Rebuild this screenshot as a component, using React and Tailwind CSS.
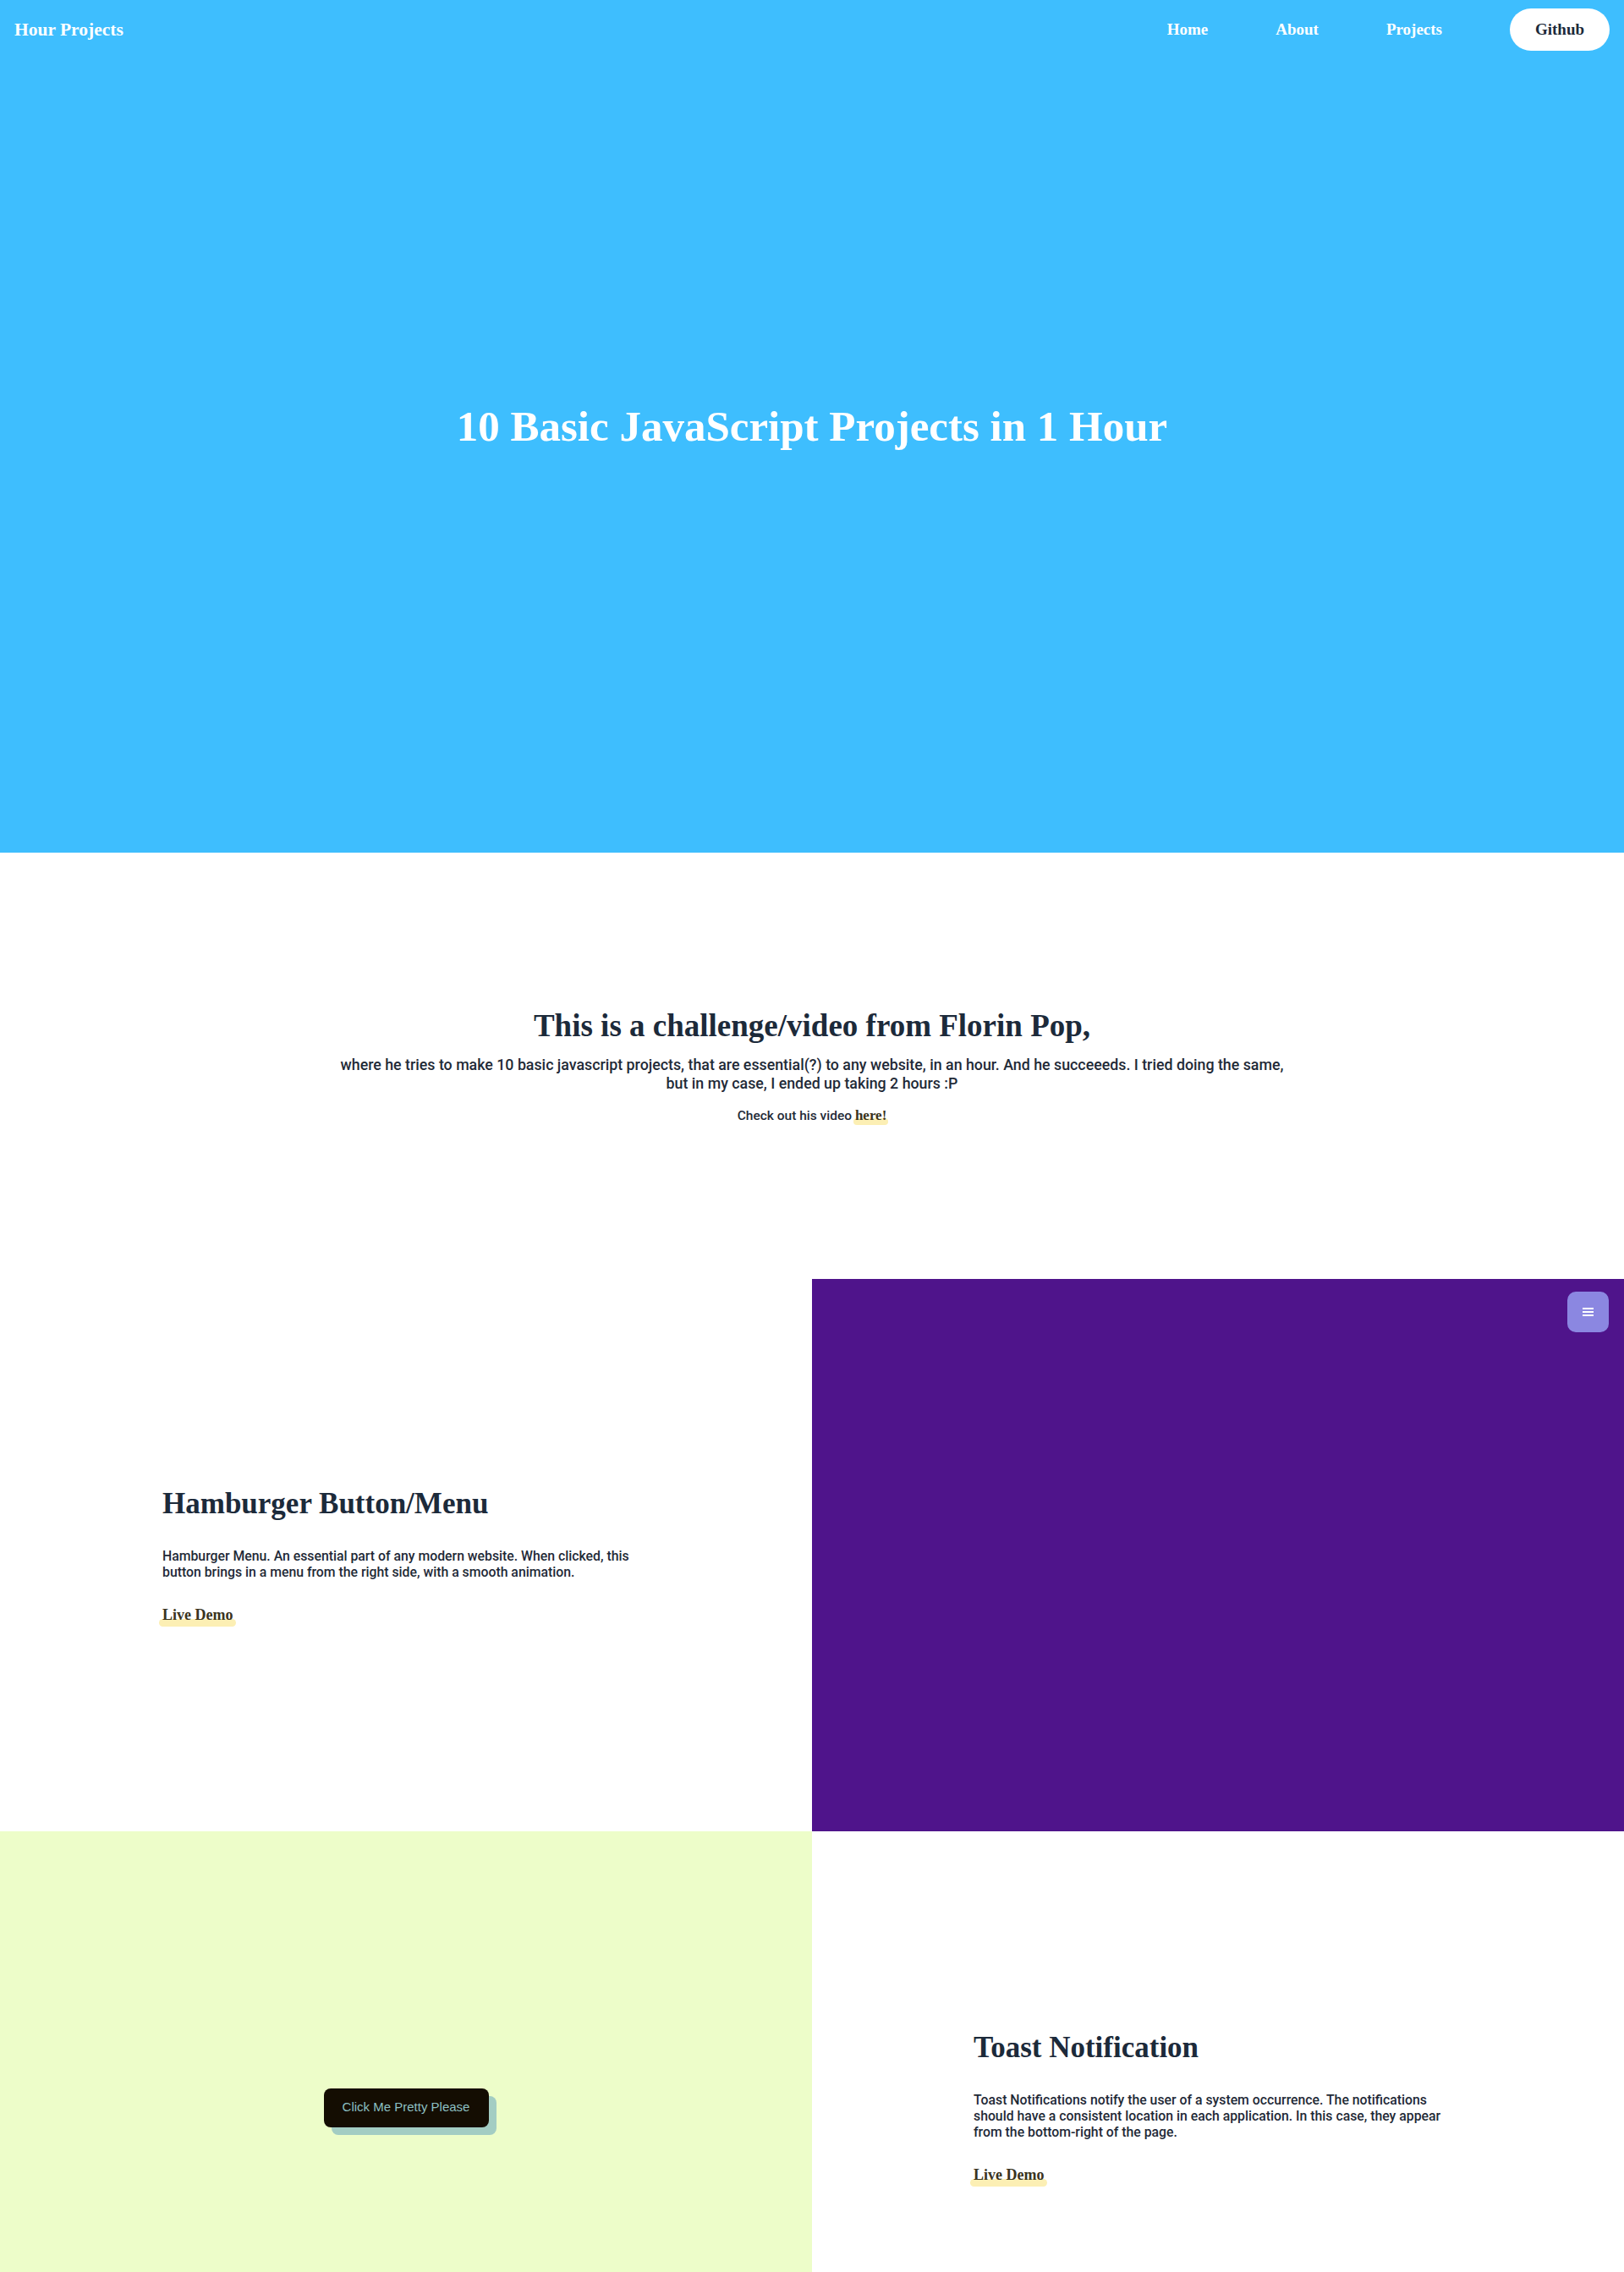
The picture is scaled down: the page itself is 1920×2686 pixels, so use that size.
import React from "react";

const serif = { fontFamily: '"Liberation Serif", "DejaVu Serif", serif' };
const sans = { fontFamily: 'Roboto, "Noto Sans", sans-serif' };

function LiveDemo() {
  return (
    <a
      className="relative inline-block text-[18px] leading-[24px] font-bold text-[#3a3320]"
      style={serif}
    >
      <span className="absolute left-[-4px] right-[-4px] bottom-[-2px] h-[9px] rounded-full bg-[#fcefb4]" />
      <span className="relative">Live Demo</span>
    </a>
  );
}

function ProjectText({ title, children }) {
  return (
    <div className="flex flex-col items-start w-[560px]">
      <h2 className="text-[35px] leading-[42px] font-bold text-[#1c2a3a]" style={serif}>
        {title}
      </h2>
      <p className="mt-[31px] text-[15.8px] leading-[19px] text-[#1f2a37] font-medium" style={sans}>
        {children}
      </p>
      <div className="mt-[29px]">
        <LiveDemo />
      </div>
    </div>
  );
}

export default function App() {
  return (
    <div className="w-full h-[2686px] overflow-hidden bg-white">
      {/* Hero */}
      <section className="h-[1008px] bg-[#3ebefe] flex flex-col">
        <nav className="h-[70px] flex items-center justify-between pl-[17px] pr-[17px]">
          <div className="text-[21.5px] font-bold text-white" style={serif}>
            Hour Projects
          </div>
          <div className="flex items-center gap-[80px]">
            <a className="text-[19px] font-bold text-white" style={serif}>Home</a>
            <a className="text-[19px] font-bold text-white" style={serif}>About</a>
            <a className="text-[19px] font-bold text-white" style={serif}>Projects</a>
            <a
              className="h-[50px] w-[118px] flex items-center justify-center rounded-full bg-white text-[19px] font-bold text-[#1c2a3a]"
              style={serif}
            >
              Github
            </a>
          </div>
        </nav>
        <div className="flex-1 flex items-center justify-center pb-[70px]">
          <h1 className="text-[51px] font-bold text-white" style={serif}>
            10 Basic JavaScript Projects in 1 Hour
          </h1>
        </div>
      </section>

      {/* Intro */}
      <section className="h-[504px] flex flex-col items-center justify-center text-center">
        <h2 className="text-[37px] leading-[44px] font-bold text-[#1c2a3a]" style={serif}>
          This is a challenge/video from Florin Pop,
        </h2>
        <p
          className="mt-[13px] max-w-[1140px] text-[17.8px] leading-[22px] font-medium text-[#1f2a37]"
          style={sans}
        >
          where he tries to make 10 basic javascript projects, that are essential(?) to any website, in an hour. And he succeeeds. I tried doing the same, but in my case, I ended up taking 2 hours :P
        </p>
        <p className="mt-[17px] text-[15.5px] leading-[20px] font-medium text-[#1f2a37]" style={sans}>
          Check out his video{" "}
          <span className="relative inline-block text-[17px] font-bold text-[#3a3320]" style={serif}>
            <span className="absolute left-[-2px] right-[-2px] bottom-[-1px] h-[8px] rounded-full bg-[#fcefb4]" />
            <span className="relative">here!</span>
          </span>
        </p>
      </section>

      {/* Hamburger */}
      <section className="grid grid-cols-2 h-[653px]">
        <div className="flex items-center pl-[192px]">
          <ProjectText title="Hamburger Button/Menu">
            Hamburger Menu. An essential part of any modern website. When clicked, this button brings in a menu from the right side, with a smooth animation.
          </ProjectText>
        </div>
        <div className="bg-[#4f148b] flex justify-end items-start pt-[15px] pr-[18px]">
          <button className="w-[49px] h-[48px] rounded-[10px] bg-[#8b87e1] flex flex-col items-center justify-center gap-[2px]">
            <span className="block w-[13px] h-[2px] bg-white" />
            <span className="block w-[13px] h-[2px] bg-white" />
            <span className="block w-[13px] h-[2px] bg-white" />
          </button>
        </div>
      </section>

      {/* Toast */}
      <section className="grid grid-cols-2 h-[653px]">
        <div className="bg-[#edfdc9] flex items-center justify-center">
          <button
            className="w-[195px] h-[46px] rounded-[8px] bg-[#140d02] text-[15px] text-[#8cc0c2] shadow-[9px_9px_0_#a3cdc3]"
            style={{ fontFamily: '"Liberation Sans", Arial, sans-serif' }}
          >
            Click Me Pretty Please
          </button>
        </div>
        <div className="flex items-center pl-[191px]">
          <ProjectText title="Toast Notification">
            Toast Notifications notify the user of a system occurrence. The notifications should have a consistent location in each application. In this case, they appear from the bottom-right of the page.
          </ProjectText>
        </div>
      </section>
    </div>
  );
}
